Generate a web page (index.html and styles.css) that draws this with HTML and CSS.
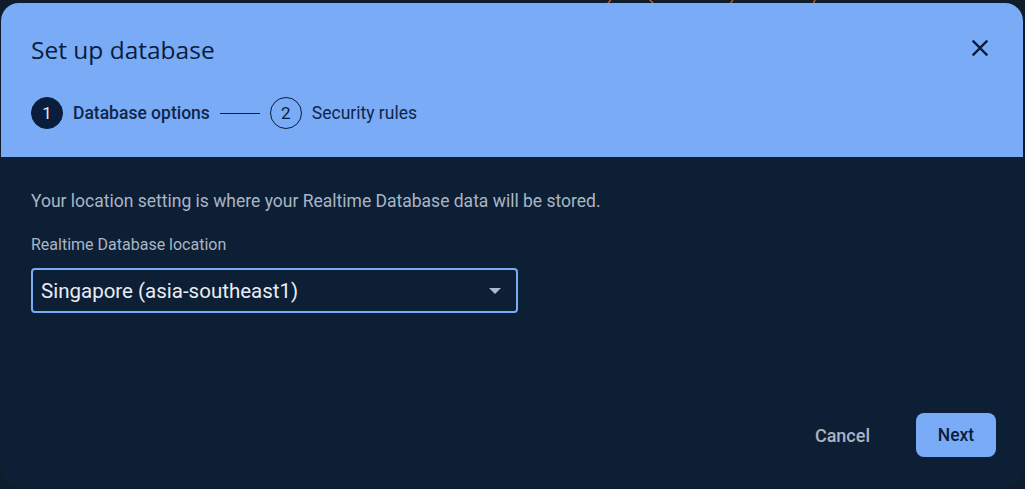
FILE: index.html
```html
<!DOCTYPE html>
<html lang="en">
<head>
<meta charset="utf-8">
<title>Set up database</title>
<link rel="stylesheet" href="styles.css">
</head>
<body>
<svg class="backdrop" width="1025" height="12" viewBox="0 0 1025 12" aria-hidden="true">
  <path d="M606 6 L612 -2" stroke="#b8573e" stroke-width="1.5" fill="none"/>
  <path d="M648 -2 L656 6" stroke="#b8573e" stroke-width="1.5" fill="none"/>
  <path d="M729 6 L734 -2" stroke="#b8573e" stroke-width="1.5" fill="none"/>
  <path d="M812 6 L816 -2" stroke="#b8573e" stroke-width="1.5" fill="none"/>
</svg>
<div class="dialog">
  <div class="header">
    <div class="title-row">
      <h1 class="title">Set up database</h1>
      <button class="close" aria-label="Close">
        <svg width="28" height="28" viewBox="0 0 24 24"><path d="M19 6.41 17.59 5 12 10.59 6.41 5 5 6.41 10.59 12 5 17.59 6.41 19 12 13.41 17.59 19 19 17.59 13.41 12z" fill="#0b1d3c"/></svg>
      </button>
    </div>
    <div class="stepper">
      <span class="step-num active">1</span>
      <span class="step-label active-label">Database options</span>
      <span class="step-line"></span>
      <span class="step-num">2</span>
      <span class="step-label">Security rules</span>
    </div>
  </div>
  <div class="content">
    <p class="desc">Your location setting is where your Realtime Database data will be stored.</p>
    <div class="field-label">Realtime Database location</div>
    <div class="select">
      <span class="select-value">Singapore (asia-southeast1)</span>
      <svg class="arrow" width="14" height="8" viewBox="0 0 14 8"><path d="M1 1 L13 1 L7 7 Z" fill="#b0bac8"/></svg>
    </div>
  </div>
  <div class="actions">
    <button class="btn-cancel">Cancel</button>
    <button class="btn-next">Next</button>
  </div>
</div>
</body>
</html>
```
FILE: styles.css
```css
html, body {
  margin: 0;
  padding: 0;
}
body {
  background: #0f1c2b;
  width: 1025px;
  height: 489px;
  overflow: hidden;
  position: relative;
  font-family: Roboto, "Liberation Sans", sans-serif;
}
.backdrop {
  position: absolute;
  left: 0;
  top: 0;
}
.dialog {
  position: relative;
  margin: 3px 2px 0 1px;
  height: 484px;
  border-radius: 18px;
  overflow: hidden;
  background: #0d1f35;
  display: flex;
  flex-direction: column;
}
.header {
  background: #7aabf7;
  height: 154px;
  box-sizing: border-box;
  padding: 29px 30px 0 30px;
}
.title-row {
  display: flex;
  justify-content: space-between;
  align-items: flex-start;
}
.title {
  margin: 0;
  font-family: "Open Sans", Roboto, sans-serif;
  font-weight: 400;
  font-size: 24.5px;
  line-height: 36px;
  color: #0b1d3c;
  letter-spacing: 0;
}
.close {
  background: none;
  border: 0;
  padding: 0;
  margin: 2px -1px 0 0;
  width: 28px;
  height: 28px;
  cursor: pointer;
}
.close svg {
  display: block;
}
.stepper {
  display: flex;
  align-items: center;
  margin-top: 29px;
}
.step-num {
  width: 30px;
  height: 30px;
  border-radius: 50%;
  border: 1px solid #0b1d3c;
  display: flex;
  align-items: center;
  justify-content: center;
  font-size: 17px;
  color: #0b1d3c;
  flex: none;
}
.step-num.active {
  background: #0b1d3c;
  color: #dce6f7;
}
.step-label {
  margin-left: 10px;
  font-size: 17.5px;
  color: #102648;
}
.active-label {
  font-weight: 500;
}
.step-line {
  width: 40px;
  height: 1px;
  background: #0b1d3c;
  margin: 0 10px;
}
.content {
  padding: 33px 30px 0 30px;
  flex: 1;
}
.desc {
  margin: 0;
  font-size: 17.5px;
  line-height: 22px;
  color: #aab5c5;
}
.field-label {
  margin-top: 24px;
  font-size: 16px;
  line-height: 18px;
  color: #aab5c5;
}
.select {
  margin-top: 14px;
  width: 487px;
  height: 45px;
  box-sizing: border-box;
  border: 2px solid #7aabf7;
  border-radius: 4px;
  display: flex;
  align-items: center;
  justify-content: space-between;
  padding: 0 14px 0 8px;
}
.select-value {
  font-size: 20.5px;
  color: #e8edf5;
}
.arrow {
  display: block;
}
.actions {
  display: flex;
  justify-content: flex-end;
  align-items: center;
  gap: 24px;
  padding: 0 27px 30px 0;
}
.btn-cancel {
  background: none;
  border: 0;
  font-family: Roboto, sans-serif;
  font-size: 18px;
  font-weight: 500;
  color: #a9b4c4;
  padding: 0 22px;
  height: 44px;
}
.btn-next {
  background: #7aabf7;
  border: 0;
  border-radius: 8px;
  width: 80px;
  height: 44px;
  font-family: Roboto, sans-serif;
  font-size: 17.5px;
  font-weight: 500;
  color: #0b1d3c;
}
```
